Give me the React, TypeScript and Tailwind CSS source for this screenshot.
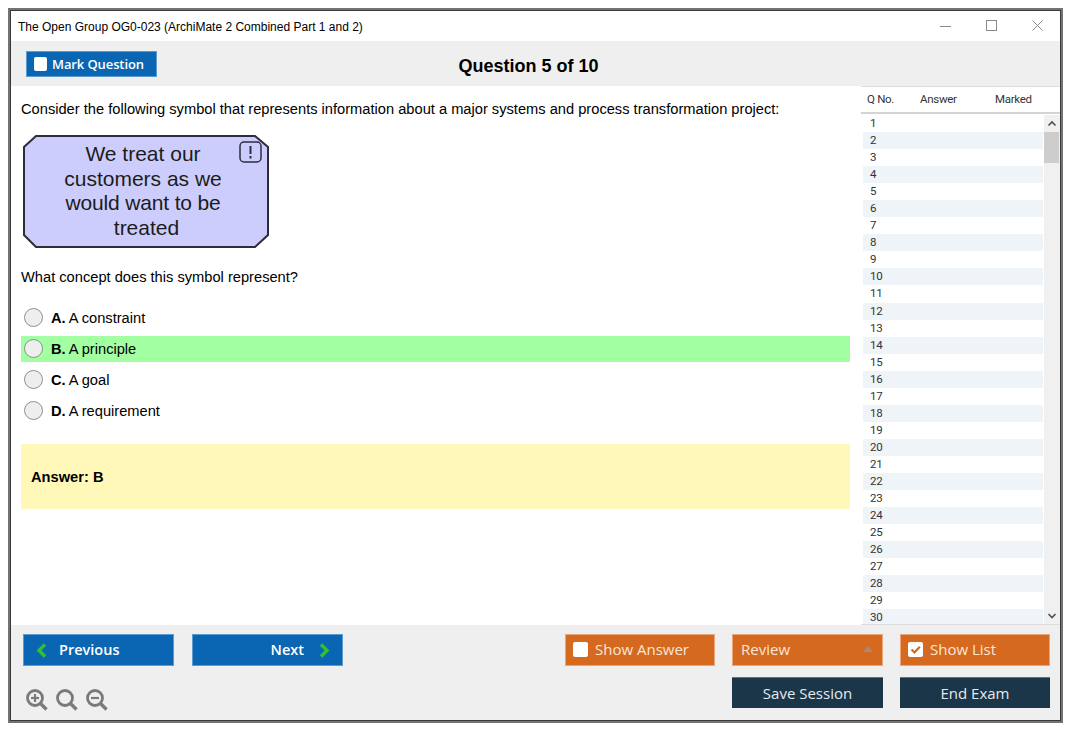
import React from "react";

const sans = "font-['Liberation_Sans',Arial,sans-serif]";
const btn = "font-['Open_Sans','Noto_Sans',sans-serif]";

function Radio() {
  return <span className="w-[19px] h-[19px] rounded-full border border-[#8f8f8f] bg-[#eeeeee] shrink-0 mr-[8px] -mt-[2px]" />;
}

function Option({ letter, text, active }: { letter: string; text: string; active?: boolean }) {
  return (
    <div className={`h-[26px] flex items-center pl-[3px] mb-[5px] text-[14.67px] text-black ${active ? "bg-[#a2ffa2]" : ""}`}>
      <Radio />
      <span className="font-bold mr-[3px]">{letter}</span>
      <span>{text}</span>
    </div>
  );
}

function Check({ checked }: { checked?: boolean }) {
  return (
    <span className="w-[15px] h-[15px] rounded-[2px] bg-white shrink-0 flex items-center justify-center">
      {checked && (
        <svg width="11" height="11" viewBox="0 0 11 11" fill="none">
          <path d="M1.5 5.5 L4.5 8.5 L9.8 2.8" stroke="#d3691f" strokeWidth="2.2" />
        </svg>
      )}
    </span>
  );
}

function Chevron({ dir }: { dir: "left" | "right" }) {
  return (
    <svg width="11" height="15" viewBox="0 0 11 15" fill="none">
      <path d={dir === "left" ? "M9 1.5 L3 7.5 L9 13.5" : "M2 1.5 L8 7.5 L2 13.5"} stroke="#2fc12f" strokeWidth="3.4" />
    </svg>
  );
}

function Zoom({ kind }: { kind: "plus" | "none" | "minus" }) {
  return (
    <svg width="22" height="22" viewBox="0 0 22 22" fill="none" stroke="#7a7a7a">
      <circle cx="9" cy="9" r="7.5" strokeWidth="2.8" />
      <path d="M14.5 14.5 L20.5 20.5" strokeWidth="3.4" />
      {kind !== "none" && <path d="M5 9 H13" strokeWidth="2.2" />}
      {kind === "plus" && <path d="M9 5 V13" strokeWidth="2.2" />}
    </svg>
  );
}

export default function App() {
  const rows = Array.from({ length: 30 }, (_, i) => i + 1);
  return (
    <div className="w-[1075px] h-[735px] bg-white p-[8px] pr-[12px] pb-[12px]">
      <div className={`h-full border-[2px] border-[#737373] ${sans}`}>
        <div className="h-full border border-[#3a3a3a] flex flex-col bg-white">
          {/* Title bar */}
          <div className="h-[30px] flex items-center justify-between pl-[7px] pt-[1px] shrink-0">
            <span className="text-[12px] text-black">The Open Group OG0-023 (ArchiMate 2 Combined Part 1 and 2)</span>
            <div className="flex items-center gap-[35px] pr-[17px] -mt-[2px]">
              <svg width="11" height="11" viewBox="0 0 11 11" stroke="#8a8a8a" fill="none"><path d="M0 6.5 H11" /></svg>
              <svg width="11" height="11" viewBox="0 0 11 11" stroke="#8a8a8a" fill="none"><rect x="0.5" y="0.5" width="10" height="10" /></svg>
              <svg width="11" height="11" viewBox="0 0 11 11" stroke="#8a8a8a" fill="none"><path d="M0.5 0.5 L10.5 10.5 M10.5 0.5 L0.5 10.5" /></svg>
            </div>
          </div>
          {/* Toolbar */}
          <div className="h-[45px] bg-[#efefef] relative flex items-start pl-[15px] pt-[10px] shrink-0">
            <div className={`w-[131px] h-[26px] bg-[#0a66b3] border border-[#5b9bd0] flex items-center pl-[7px] gap-[5px] text-white text-[13px] font-semibold tracking-[-0.1px] pt-[2px] ${btn}`}>
              <span className="w-[13px] h-[14px] rounded-[2px] bg-white shrink-0 -mt-[2px]" />
              Mark Question
            </div>
            <div className="flex-1 text-center text-[18px] font-bold text-black mt-[2px] pr-[160px]">Question 5 of 10</div>
          </div>
          {/* Main */}
          <div className="flex-1 flex min-h-0">
            <div className="flex-1 pl-[10px] pr-[11px] pt-[14px] min-w-0">
              <p className="text-[14.67px] leading-[18px] text-black mb-[17px]">
                Consider the following symbol that represents information about a major systems and process transformation project:
              </p>
              <div className="relative w-[246px] h-[114px] ml-[2px] mb-[19px]">
                <svg width="246" height="114" viewBox="0 0 246 114" className="absolute inset-0">
                  <path d="M13 1 H232 L245 12 V100 L232 112 H13 L1 100 V12 Z" fill="#cccdfd" stroke="#2c2c3c" strokeWidth="2" />
                  <rect x="217" y="7" width="21" height="20" rx="4" fill="none" stroke="#2c2c3c" strokeWidth="1.5" />
                  <path d="M227.5 11 V19 M227.5 21 V23.5" stroke="#2c2c3c" strokeWidth="2" />
                </svg>
                <div className="absolute left-[25px] top-[7px] w-[190px] text-center text-[21px] leading-[24.5px] text-[#1c1c1c]">
                  <div>We treat our</div>
                  <div>customers as we</div>
                  <div className="tracking-[-0.15px]">would want to be</div>
                  <div className="pl-[7px]">treated</div>
                </div>
              </div>
              <p className="text-[14.67px] leading-[18px] text-black mb-[19px]">What concept does this symbol represent?</p>
              <Option letter="A." text="A constraint" />
              <Option letter="B." text="A principle" active />
              <Option letter="C." text="A goal" />
              <Option letter="D." text="A requirement" />
              <div className="mt-[20px] h-[65px] bg-[#fff8b8] flex items-center pl-[10px] text-[14.67px] font-bold text-black">
                Answer: B
              </div>
            </div>
            {/* Sidebar */}
            <div className="w-[199px] shrink-0 flex flex-col text-[11.5px] text-[#333333] font-['Roboto',sans-serif]">
              <div className="h-[28px] border-t border-[#dddddd] border-b-[2px] border-b-[#d4d4d4] flex items-center pl-[6px] shrink-0 tracking-[-0.3px]">
                <span className="w-[53px]">Q No.</span>
                <span className="w-[75px]">Answer</span>
                <span>Marked</span>
              </div>
              <div className="flex-1 flex min-h-0 mt-[1px] overflow-hidden border-b border-[#dddddd]">
                <div className="w-[180px] ml-[2px]">
                  {rows.map((n) => (
                    <div key={n} className={`h-[17.06px] leading-[17px] pl-[7px] tracking-[-0.3px] ${n % 2 === 0 ? "bg-[#eff4f9]" : "bg-white"}`}>
                      {n}
                    </div>
                  ))}
                </div>
                <div className="w-[16px] ml-[1px] bg-[#f0f0f0] relative">
                  <svg width="16" height="16" viewBox="0 0 16 16" className="absolute top-0 left-0 mt-[1px]" fill="none">
                    <path d="M4.5 9.5 L8 6 L11.5 9.5" stroke="#505050" strokeWidth="1.6" />
                  </svg>
                  <div className="absolute top-[17px] left-0 w-[15px] h-[31px] bg-[#cdcdcd]" />
                  <svg width="16" height="16" viewBox="0 0 16 16" className="absolute bottom-0 left-0" fill="none">
                    <path d="M4.5 6 L8 9.5 L11.5 6" stroke="#505050" strokeWidth="1.6" />
                  </svg>
                </div>
              </div>
            </div>
          </div>
          {/* Bottom */}
          <div className={`h-[95px] bg-[#efefef] shrink-0 flex flex-col pt-[9px] pl-[12px] pr-[10px] ${btn}`}>
            <div className="flex items-center text-[15px] h-[32px]">
              <div className="w-[151px] h-[32px] bg-[#0a66b3] border border-[#5b9bd0] flex items-center pl-[12px] gap-[12px] text-white text-[14.5px] font-semibold">
                <Chevron dir="left" />
                Previous
              </div>
              <div className="w-[151px] h-[32px] ml-[18px] bg-[#0a66b3] border border-[#5b9bd0] flex items-center justify-end pr-[12px] gap-[15px] text-white text-[14.5px] font-semibold">
                Next
                <Chevron dir="right" />
              </div>
              <div className="flex-1" />
              <div className="w-[150px] h-[32px] bg-[#d4691f] border border-[#e8a77a] flex items-center pl-[7px] pb-[2px] gap-[7px] text-[#fbe6d6]">
                <Check />
                Show Answer
              </div>
              <div className="w-[151px] h-[32px] ml-[17px] bg-[#d4691f] border border-[#e8a77a] flex items-center justify-between pl-[8px] pr-[9px] pb-[2px] text-[#fbe6d6]">
                Review
                <span className="w-0 h-0 border-x-[5px] border-x-transparent border-b-[6px] border-b-[#a88b76]" />
              </div>
              <div className="w-[150px] h-[32px] ml-[17px] bg-[#d4691f] border border-[#e8a77a] flex items-center pl-[7px] pb-[2px] gap-[7px] text-[#fbe6d6]">
                <Check checked />
                Show List
              </div>
            </div>
            <div className="flex items-start mt-[11px] text-[15px]">
              <div className="flex items-center gap-[8px] pl-[3px] mt-[12px]">
                <Zoom kind="plus" />
                <Zoom kind="none" />
                <Zoom kind="minus" />
              </div>
              <div className="flex-1" />
              <div className="w-[151px] h-[31px] bg-[#1b3549] border-t border-[#5d7283] flex items-center justify-center text-[#e4ebf0]">Save Session</div>
              <div className="w-[150px] h-[31px] ml-[17px] bg-[#1b3549] border-t border-[#5d7283] flex items-center justify-center text-[#e4ebf0]">End Exam</div>
            </div>
          </div>
        </div>
      </div>
    </div>
  );
}
